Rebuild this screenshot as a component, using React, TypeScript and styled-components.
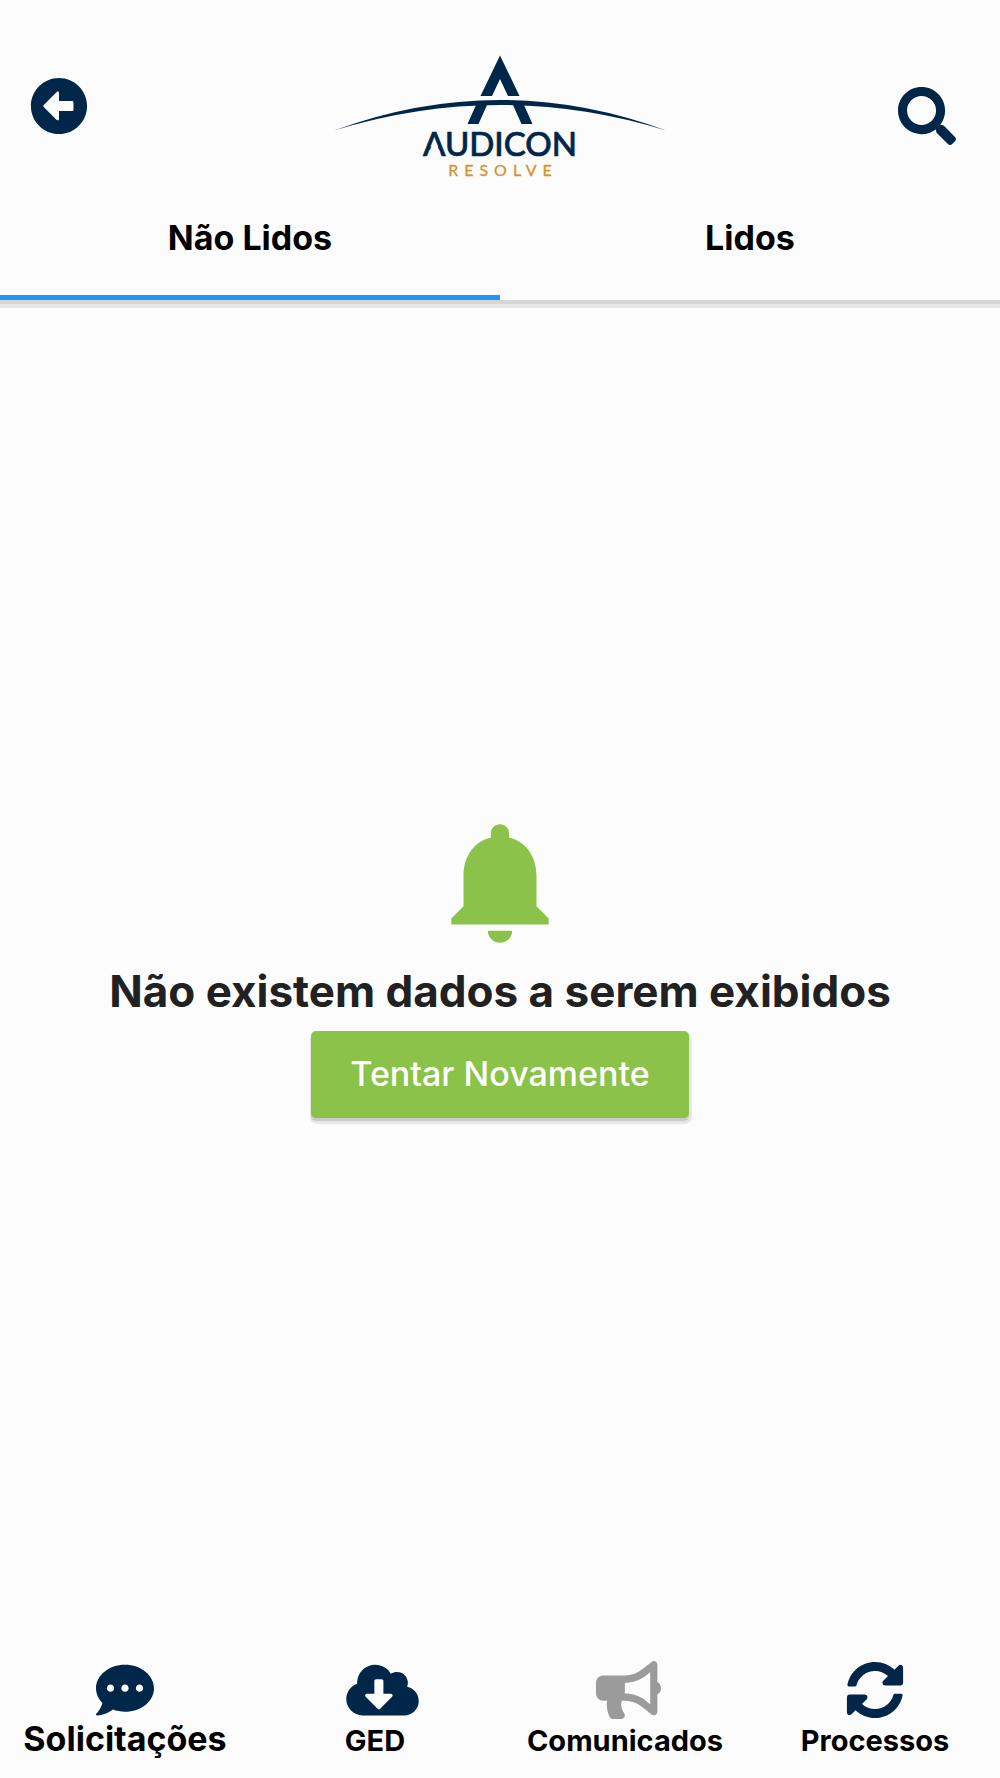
import React, { useState } from "react";
import styled, { createGlobalStyle } from "styled-components";
import {
  FaArrowAltCircleLeft,
  FaBullhorn,
  FaCloudDownloadAlt,
  FaCommentDots,
  FaSearch,
  FaSyncAlt,
} from "react-icons/fa";
import { MdNotifications } from "react-icons/md";

const colors = {
  page: "#fcfcfc",
  navy: "#00264a",
  gold: "#d6922e",
  blue: "#2196f3",
  green: "#8bc34a",
  muted: "#9b9b9b",
  heading: "#212121",
};

const GlobalStyle = createGlobalStyle`
  *, *::before, *::after { box-sizing: border-box; }
  body {
    margin: 0;
    background: ${colors.page};
    color: #000;
    font-family: Inter, "Liberation Sans", sans-serif;
  }
  button { font: inherit; color: inherit; border: 0; padding: 0; background: none; cursor: pointer; }
`;

const Screen = styled.div`
  min-height: 100vh;
  display: flex;
  flex-direction: column;
`;

const Header = styled.header`
  padding-top: 55px;
  box-shadow: 0 4px 0 #d5d5d5, 0 8px 0 #e7e7e7;
`;

const TopBar = styled.div`
  display: grid;
  grid-template-columns: 1fr auto 1fr;
  align-items: start;
  height: 124px;
  padding: 0 44px 0 30px;
`;

const IconButton = styled.button<{ $end?: boolean }>`
  display: flex;
  justify-self: ${(p) => (p.$end ? "end" : "start")};
  margin-top: ${(p) => (p.$end ? 32 : 22)}px;
  color: ${colors.navy};
  font-size: 58px;
`;

const Logo = styled.svg`
  display: block;
  width: 334px;
  height: 124px;
  margin-left: 14px;
`;

const Wordmark = styled.text`
  font-family: Lato, sans-serif;
  font-size: 33px;
  font-weight: 500;
  fill: ${colors.navy};
  stroke: ${colors.navy};
  stroke-width: 0.7;
`;

const Tagline = styled.text`
  font-family: Lato, sans-serif;
  font-size: 16px;
  letter-spacing: 6px;
  fill: ${colors.gold};
  stroke: ${colors.gold};
  stroke-width: 0.3;
`;

const Tabs = styled.div`
  display: grid;
  grid-template-columns: 1fr 1fr;
`;

const Tab = styled.button<{ $active: boolean }>`
  && {
    height: 121px;
    padding-top: 2px;
    border-bottom: 5px solid ${(p) => (p.$active ? colors.blue : "transparent")};
    font-size: 34px;
    font-weight: 700;
    line-height: 40px;
  }
`;

const Empty = styled.main`
  flex: 1;
  display: flex;
  flex-direction: column;
  align-items: center;
  justify-content: center;
`;

const Bell = styled(MdNotifications)`
  font-size: 146px;
  color: ${colors.green};
`;

const Message = styled.h1`
  margin: 0 0 4px;
  font-size: 44px;
  font-weight: 700;
  line-height: 72px;
  color: ${colors.heading};
`;

const RetryButton = styled.button`
  && {
    padding: 23px 39px 24px;
    border-radius: 5px;
    background: ${colors.green};
    color: #fff;
    font-size: 34px;
    font-weight: 500;
    line-height: 40px;
    box-shadow: 0 3px 1px #c9c9c9, 1px 4px 0 2px #e7e7e7;
  }
`;

const BottomNav = styled.nav`
  display: grid;
  grid-template-columns: repeat(4, 1fr);
  padding: 35px 0 21px;
`;

const NavItem = styled.button`
  display: flex;
  flex-direction: column;
  align-items: center;
  justify-content: space-between;
  gap: 2px;
`;

const NavIcon = styled.span<{ $muted?: boolean; $width?: number }>`
  display: flex;
  width: 58px;
  height: 58px;
  font-size: 58px;
  color: ${(p) => (p.$muted ? colors.muted : colors.navy)};

  svg {
    flex: none;
    width: ${(p) => p.$width ?? 58}px;
  }
`;

const NavLabel = styled.span<{ $large?: boolean }>`
  font-size: ${(p) => (p.$large ? 34 : 29)}px;
  line-height: ${(p) => (p.$large ? 36 : 32)}px;
  font-weight: 700;
`;

const tabs = ["Não Lidos", "Lidos"];

const navItems = [
  { label: "Solicitações", icon: <FaCommentDots />, large: true },
  { label: "GED", icon: <FaCloudDownloadAlt />, width: 73 },
  { label: "Comunicados", icon: <FaBullhorn />, width: 65, muted: true },
  { label: "Processos", icon: <FaSyncAlt /> },
];

function AudiconLogo() {
  return (
    <Logo viewBox="333 55 334 124" role="img" aria-label="Audicon Resolve">
      <g fill={colors.navy}>
        <path d="M500 55.500L519.500 96H508L500 79L492 96H480.500Z" />
        <path d="M334 130.500Q417 100 500 100Q583 100 666 130.500Q583 105 500 105Q417 105 334 130.500Z" />
        <path d="M476 105H487L478.500 124H467.500ZM513 105H524L532.500 124H521.500Z" />
      </g>
      <Wordmark x="500" y="156" textAnchor="middle">AUDICON</Wordmark>
      {/* The wordmark's first letter has an open centre */}
      <path d="M432.500 143.500H436.500L439.500 151H429.500Z" fill={colors.page} />
      <Tagline x="503" y="176" textAnchor="middle">RESOLVE</Tagline>
    </Logo>
  );
}

export default function App() {
  const [active, setActive] = useState(0);
  return (
    <>
      <GlobalStyle />
      <Screen>
        <Header>
          <TopBar>
            <IconButton aria-label="Voltar"><FaArrowAltCircleLeft /></IconButton>
            <AudiconLogo />
            <IconButton $end aria-label="Pesquisar"><FaSearch /></IconButton>
          </TopBar>
          <Tabs role="tablist">
            {tabs.map((label, i) => (
              <Tab key={label} role="tab" aria-selected={active === i} $active={active === i} onClick={() => setActive(i)}>
                {label}
              </Tab>
            ))}
          </Tabs>
        </Header>
        <Empty>
          <Bell aria-hidden="true" />
          <Message>Não existem dados a serem exibidos</Message>
          <RetryButton>Tentar Novamente</RetryButton>
        </Empty>
        <BottomNav>
          {navItems.map((item) => (
            <NavItem key={item.label}>
              <NavIcon $muted={item.muted} $width={item.width}>{item.icon}</NavIcon>
              <NavLabel $large={item.large}>{item.label}</NavLabel>
            </NavItem>
          ))}
        </BottomNav>
      </Screen>
    </>
  );
}
